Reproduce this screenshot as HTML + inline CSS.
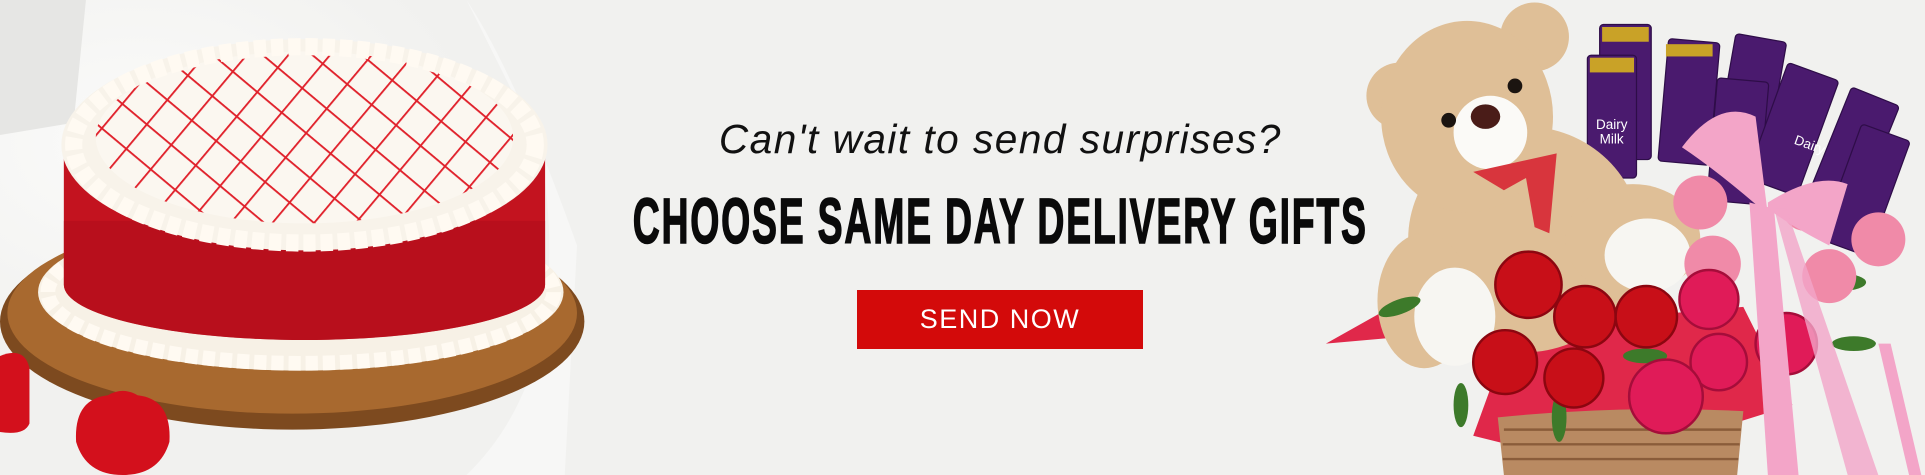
<!DOCTYPE html>
<html><head><meta charset="utf-8"><style>
html,body{margin:0;padding:0}
body{width:1925px;height:475px;overflow:hidden;background:#f1f1ef;position:relative;font-family:"Liberation Sans",sans-serif}
svg.bg{position:absolute;left:0;top:0}
.sub{position:absolute;left:0;width:2000px;top:116px;text-align:center}
.sub span{display:inline-block;font-style:italic;font-size:41px;color:#111;transform:scaleX(.99);letter-spacing:1.5px}
.h{position:absolute;left:0;width:2000px;top:186px;text-align:center}
.h span{display:inline-block;font-weight:bold;font-size:64px;line-height:70px;color:#0a0a0a;transform:scaleX(.585);letter-spacing:3px;white-space:nowrap;-webkit-text-stroke:1.5px #0a0a0a}
.btn{position:absolute;left:857px;top:290px;width:286px;height:59px;background:#d30a0a;color:#fff;font-size:27px;letter-spacing:1.5px;text-align:center;line-height:59px}
</style></head><body>
<svg class="bg" width="1925" height="475" viewBox="0 0 1568 387" preserveAspectRatio="none">
<defs>
<pattern id="grid" width="26" height="26" patternUnits="userSpaceOnUse" patternTransform="rotate(40)">
<rect width="26" height="26" fill="#fbf7f0"/><path d="M0 0H26M0 0V26" stroke="#e0202a" stroke-width="3"/></pattern>
<radialGradient id="bgl" cx=".2" cy=".3" r=".5"><stop offset="0" stop-color="#fbfbfa"/><stop offset="1" stop-color="#f1f1ef"/></radialGradient>
</defs>
<rect width="1568" height="387" fill="#f1f1ef"/>
<rect width="560" height="387" fill="url(#bgl)"/>
<path d="M0 0H70L60 100 0 110Z" fill="#e6e6e4"/>
<path d="M380 0Q420 60 470 200L460 387H380Q470 300 440 120Z" fill="#f7f7f6"/>
<!-- board -->
<ellipse cx="238" cy="262" rx="238" ry="88" fill="#7d4a1f"/>
<ellipse cx="238" cy="255" rx="232" ry="82" fill="#a8692f"/>
<!-- base piping -->
<ellipse cx="245" cy="238" rx="214" ry="64" fill="#f7f1e6"/>
<ellipse cx="245" cy="238" rx="206" ry="58" fill="none" stroke="#fffaf2" stroke-width="12" stroke-dasharray="10 4"/>
<!-- cake side -->
<path d="M52 118 V232 A196 45 0 0 0 444 232 V118Z" fill="#c3131f"/>
<path d="M52 180 V232 A196 45 0 0 0 444 232 V180Z" fill="#b00e1a" opacity=".6"/>
<!-- top -->
<ellipse cx="248" cy="118" rx="198" ry="86" fill="#f8f3ea"/>
<ellipse cx="248" cy="112" rx="170" ry="70" fill="url(#grid)"/>
<ellipse cx="248" cy="118" rx="188" ry="80" fill="none" stroke="#fffaf2" stroke-width="14" stroke-dasharray="10 4"/>
<!-- hearts -->
<path d="M62 360 Q60 325 88 322 Q100 315 112 322 Q140 325 138 360 Q130 387 100 387 Q70 387 62 360Z" fill="#d3101c"/>
<path d="M0 290 Q20 282 24 300 V345 Q20 355 0 352Z" fill="#d3101c"/>
<!-- bouquet: paper -->
<path d="M1080 280 L1160 235 L1220 300 L1200 355 L1300 380 L1460 330 L1420 250Z" fill="#e0284a"/>
<!-- basket -->
<path d="M1220 340 Q1320 330 1420 335 L1415 387 H1225Z" fill="#b98a62"/>
<path d="M1225 350H1418M1224 362H1417M1224 374H1416" stroke="#8a5c3a" stroke-width="2"/>
<!-- chocolates -->
<g fill="#4a1a6e" stroke="#2e0d48" stroke-width="1">
<rect x="1303" y="20" width="42" height="110" rx="3"/>
<rect x="1293" y="45" width="40" height="100" rx="3"/>
<rect x="1355" y="33" width="42" height="100" rx="3" transform="rotate(5 1375 80)"/>
<rect x="1405" y="30" width="42" height="90" rx="3" transform="rotate(10 1425 80)"/>
<rect x="1395" y="65" width="42" height="100" rx="3" transform="rotate(5 1415 110)"/>
<rect x="1440" y="55" width="44" height="100" rx="3" transform="rotate(20 1460 100)"/>
<rect x="1490" y="75" width="42" height="100" rx="3" transform="rotate(22 1510 120)"/>
<rect x="1500" y="105" width="42" height="100" rx="3" transform="rotate(20 1520 150)"/>
</g>
<g fill="#c9a227"><rect x="1305" y="22" width="38" height="12"/><rect x="1295" y="47" width="36" height="12"/><rect x="1357" y="36" width="38" height="10"/></g>
<g fill="#fff" font-family="Liberation Sans" font-size="11"><text x="1300" y="105">Dairy</text><text x="1303" y="117">Milk</text><text x="1462" y="120" transform="rotate(20 1470 115)">Dairy</text></g>
<!-- bear -->
<g fill="#dfbf97">
<ellipse cx="1242" cy="195" rx="95" ry="92"/>
<circle cx="1140" cy="78" r="27"/>
<circle cx="1250" cy="30" r="28"/>
<ellipse cx="1195" cy="95" rx="70" ry="78"/>
<ellipse cx="1160" cy="245" rx="38" ry="55"/>
<ellipse cx="1330" cy="195" rx="55" ry="45"/>
</g>
<ellipse cx="1214" cy="108" rx="30" ry="30" fill="#fbfaf7"/>
<ellipse cx="1210" cy="95" rx="12" ry="10" fill="#4a1c18"/>
<circle cx="1180" cy="98" r="6" fill="#1b1410"/><circle cx="1234" cy="70" r="6" fill="#1b1410"/>
<path d="M1200 140 L1268 125 L1262 190 L1250 185 L1243 145 L1225 155Z" fill="#d8353d"/>
<ellipse cx="1185" cy="258" rx="33" ry="40" fill="#f7f6f2"/>
<ellipse cx="1342" cy="208" rx="35" ry="30" fill="#f7f6f2"/>
<!-- leaves -->
<g fill="#3d7a2a"><ellipse cx="1140" cy="250" rx="18" ry="6" transform="rotate(-20 1140 250)"/><ellipse cx="1190" cy="330" rx="6" ry="18"/><ellipse cx="1270" cy="340" rx="6" ry="20"/><ellipse cx="1500" cy="230" rx="20" ry="7"/><ellipse cx="1510" cy="280" rx="18" ry="6"/><ellipse cx="1340" cy="290" rx="18" ry="6"/></g>
<!-- pink roses -->
<g fill="#f08aa8"><circle cx="1385" cy="165" r="22"/><circle cx="1395" cy="215" r="23"/><circle cx="1530" cy="195" r="22"/><circle cx="1490" cy="225" r="22"/><circle cx="1470" cy="170" r="18"/></g>
<!-- red roses -->
<g fill="#c80f18" stroke="#8c0610" stroke-width="2">
<circle cx="1245" cy="232" r="27"/><circle cx="1291" cy="258" r="25"/><circle cx="1341" cy="258" r="25"/>
<circle cx="1226" cy="295" r="26"/><circle cx="1282" cy="308" r="24"/>
</g>
<g fill="#e01b58" stroke="#a50d3a" stroke-width="2">
<circle cx="1392" cy="244" r="24"/><circle cx="1400" cy="295" r="23"/><circle cx="1357" cy="323" r="30"/><circle cx="1455" cy="280" r="25"/>
</g>
<!-- ribbon -->
<g fill="#f3a5c8">
<path d="M1370 120 Q1400 80 1430 95 L1440 175 Q1400 140 1370 120Z"/>
<path d="M1440 165 Q1480 140 1505 150 L1490 200 Q1460 185 1440 170Z"/>
<path d="M1425 165 L1445 170 L1465 387 H1440Z"/>
<path d="M1445 170 L1455 170 L1530 387 H1505Z" opacity=".8"/>
<path d="M1530 280 L1540 280 L1565 387 H1555Z"/>
</g>
</svg>
<div class="sub"><span>Can't wait to send surprises?</span></div>
<div class="h"><span>CHOOSE SAME DAY DELIVERY GIFTS</span></div>
<div class="btn">SEND NOW</div>
</body></html>
